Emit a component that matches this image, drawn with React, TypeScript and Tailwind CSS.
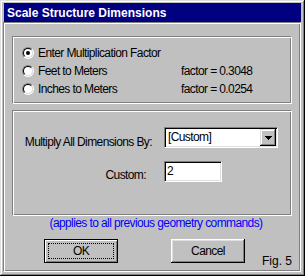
import React from "react";

function Radio({ checked }: { checked?: boolean }) {
  return (
    <span className="w-[12px] h-[12px] shrink-0 rounded-full border border-t-[#808080] border-l-[#808080] border-r-white border-b-white flex">
      <span className="w-full h-full rounded-full bg-white border border-t-black border-l-black border-r-[#dfdfdf] border-b-[#dfdfdf] flex items-center justify-center">
        {checked && <span className="w-[4px] h-[4px] rounded-full bg-black" />}
      </span>
    </span>
  );
}

function Option({ label, factor, checked }: { label: string; factor?: string; checked?: boolean }) {
  return (
    <div className="h-[18px] flex items-center">
      <div className="w-[159px] flex items-center gap-[4px]">
        <Radio checked={checked} />
        <span>{label}</span>
      </div>
      {factor && <span>{factor}</span>}
    </div>
  );
}

const sunken =
  "border border-t-[#808080] border-l-[#808080] border-b-white border-r-white shadow-[inset_1px_1px_#000,inset_-1px_-1px_#dfdfdf] p-[1px] bg-white";
const etched =
  "border border-t-[#808080] border-l-[#808080] border-b-white border-r-white shadow-[inset_1px_1px_#fff,inset_-1px_-1px_#808080]";

export default function App() {
  return (
    <div className="w-[305px] h-[276px] bg-[#c0c0c0] pt-[3px] pl-[3px] pr-[4px] pb-[4px] shadow-[inset_-1px_-1px_#000,inset_1px_1px_#dfdfdf,inset_-2px_-2px_#808080,inset_2px_2px_#fff] flex flex-col font-['Liberation_Sans',Arial,sans-serif] text-[12px] leading-[15px] tracking-[-0.6px] whitespace-nowrap text-black">
      <div className="ml-[1px] h-[19px] shrink-0 bg-[#000080] text-white font-bold text-[12px] leading-[14px] tracking-[0px] flex items-center pl-[3px]">
        Scale Structure Dimensions
      </div>
      <div className={`h-[250px] ${etched} pt-[13px] px-[8px] flex flex-col`}>
        <div className={`h-[68px] ${etched} pt-[7px] pl-[9px] flex flex-col`}>
          <Option label="Enter Multiplication Factor" checked />
          <Option label="Feet to Meters" factor="factor = 0.3048" />
          <Option label="Inches to Meters" factor="factor = 0.0254" />
        </div>
        <div className={`mt-[6px] h-[106px] ${etched} pt-[16px] flex flex-col`}>
          <div className="flex items-start">
            <span className="w-[139px] mt-[8px] text-right">Multiply All Dimensions By:</span>
            <div className={`ml-[12px] w-[114px] h-[21px] ${sunken} flex items-center`}>
              <span className="flex-1 pl-[2px]">[Custom]</span>
              <span className="w-[16px] h-[17px] bg-[#c0c0c0] shadow-[inset_-1px_-1px_#000,inset_1px_1px_#dfdfdf,inset_-2px_-2px_#808080,inset_2px_2px_#fff] flex items-center justify-center">
                <svg width="7" height="4" viewBox="0 0 7 4">
                  <path d="M0 0h7v1h-1v1h-1v1h-1v1h-1v-1h-1v-1h-1v-1h-1z" fill="#000" />
                </svg>
              </span>
            </div>
          </div>
          <div className="mt-[11px] flex items-start">
            <span className="w-[139px] mt-[7px] pr-[6px] text-right">Custom:</span>
            <div className={`ml-[12px] w-[58px] h-[21px] ${sunken} flex items-center`}>
              <span className="pl-[1px]">2</span>
            </div>
          </div>
        </div>
        <div className="pl-[8px] text-center text-[#0000ff]">(applies to all previous geometry commands)</div>
        <div className="mt-[8px] ml-[32px] flex items-start">
          <button className="relative w-[75px] h-[24px] bg-[#c0c0c0] border border-black shadow-[inset_1px_1px_#fff,inset_-1px_-1px_#808080] flex items-center justify-center">
            OK
            <span className="absolute inset-[3px] border border-dotted border-black" />
          </button>
          <button className="ml-[53px] w-[75px] h-[24px] bg-[#c0c0c0] shadow-[inset_-1px_-1px_#000,inset_1px_1px_#fff,inset_-2px_-2px_#808080,inset_2px_2px_#dfdfdf] flex items-center justify-center">
            Cancel
          </button>
          <span className="ml-[17px] mt-[15px] text-[12px] leading-[14px] tracking-[0px]">Fig. 5</span>
        </div>
      </div>
    </div>
  );
}
